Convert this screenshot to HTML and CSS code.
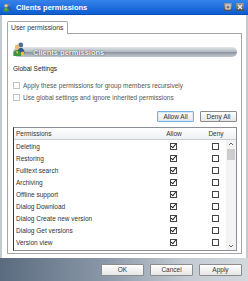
FILE: index.html
```html
<!DOCTYPE html>
<html lang="en">
<head>
  <meta charset="UTF-8" />
  <title>Clients permissions</title>
  <link rel="stylesheet" href="styles.css">
</head>
<body>
  <div class="window">
    <div class="titlebar">
      <svg class="title-icon" viewBox="0 0 10 10">
        <circle cx="6.5" cy="2.3" r="1.8" fill="#5a7fb0"/>
        <path d="M3.6 9.5 C3.6 6 4.6 4.4 6.5 4.4 C8.4 4.4 9.6 6 9.6 9.5 Z" fill="#2f5f9c"/>
        <circle cx="3.4" cy="3.6" r="1.9" fill="#f1c27a"/>
        <path d="M0.3 10 C0.3 7 1.3 5.8 3.4 5.8 C5.5 5.8 6.5 7 6.5 10 Z" fill="#3c9a3a"/>
        <path d="M2.6 7 L4.2 7 L3.4 9 Z" fill="#e8d34a"/>
      </svg>
      <span class="title">Clients permissions</span>
      <div class="title-buttons">
        <span class="tbtn">
          <svg viewBox="0 0 8 8"><rect x="2" y="2" width="4" height="4" fill="none" stroke="#eee" stroke-width="1"/></svg>
        </span>
        <span class="tbtn">
          <svg viewBox="0 0 8 8"><path d="M2 2 L6 6 M6 2 L2 6" stroke="#eee" stroke-width="1.2"/></svg>
        </span>
      </div>
    </div>

    <div class="content">
      <div class="tabs"><span class="tab">User permissions</span></div>
      <div class="panel">
        <div class="banner">
          <svg class="banner-icon" viewBox="0 0 12 14">
            <circle cx="7.8" cy="3" r="2.4" fill="#4a6f9e"/>
            <path d="M4.2 12 C4.2 7.8 5.6 6 7.8 6 C10 6 11.6 7.8 11.6 12 Z" fill="#2d5790"/>
            <circle cx="4.2" cy="5" r="2.4" fill="#eab873"/>
            <path d="M0.4 14 C0.4 9.8 1.8 8 4.2 8 C6.6 8 8 9.8 8 14 Z" fill="#39953a"/>
            <path d="M3.2 9.2 L5.2 9.2 L4.2 12.4 Z" fill="#f0d84a"/>
            <circle cx="9.6" cy="11.4" r="1.8" fill="#f2c230"/>
          </svg>
          <span class="banner-text">Clients permissions</span>
        </div>

        <div class="section-title">Global Settings</div>
        <div class="option"><span class="box box-light"></span>Apply these permissions for group members recursively</div>
        <div class="option"><span class="box box-light"></span>Use global settings and ignore inherited permissions</div>

        <div class="actions">
          <button class="btn btn-focus">Allow All</button>
          <button class="btn">Deny All</button>
        </div>

        <div class="grid">
          <div class="grid-head">
            <span class="col-name">Permissions</span>
            <span class="col-allow">Allow</span>
            <span class="col-deny">Deny</span>
          </div>
          <div class="grid-body">
            <div class="rows">
              <div class="row"><span class="col-name">Deleting</span><span class="col-allow"><span class="box checked"></span></span><span class="col-deny"><span class="box"></span></span></div>
              <div class="row"><span class="col-name">Restoring</span><span class="col-allow"><span class="box checked"></span></span><span class="col-deny"><span class="box"></span></span></div>
              <div class="row"><span class="col-name">Fulltext search</span><span class="col-allow"><span class="box checked"></span></span><span class="col-deny"><span class="box"></span></span></div>
              <div class="row"><span class="col-name">Archiving</span><span class="col-allow"><span class="box checked"></span></span><span class="col-deny"><span class="box"></span></span></div>
              <div class="row"><span class="col-name">Offline support</span><span class="col-allow"><span class="box checked"></span></span><span class="col-deny"><span class="box"></span></span></div>
              <div class="row"><span class="col-name">Dialog Download</span><span class="col-allow"><span class="box checked"></span></span><span class="col-deny"><span class="box"></span></span></div>
              <div class="row"><span class="col-name">Dialog Create new version</span><span class="col-allow"><span class="box checked"></span></span><span class="col-deny"><span class="box"></span></span></div>
              <div class="row"><span class="col-name">Dialog Get versions</span><span class="col-allow"><span class="box checked"></span></span><span class="col-deny"><span class="box"></span></span></div>
              <div class="row"><span class="col-name">Version view</span><span class="col-allow"><span class="box checked"></span></span><span class="col-deny"><span class="box"></span></span></div>
              <div class="row"><span class="col-name">&nbsp;</span><span class="col-allow"><span class="box checked"></span></span><span class="col-deny"><span class="box"></span></span></div>
            </div>
            <div class="scrollbar">
              <span class="arrow"><svg viewBox="0 0 6 4"><path d="M1 3 L3 1 L5 3" fill="none" stroke="#555" stroke-width="0.9"/></svg></span>
              <span class="thumb"></span>
              <span class="track"></span>
              <span class="arrow"><svg viewBox="0 0 6 4"><path d="M1 1 L3 3 L5 1" fill="none" stroke="#555" stroke-width="0.9"/></svg></span>
            </div>
          </div>
        </div>
      </div>
    </div>

    <div class="footer">
      <button class="btn btn-footer">OK</button>
      <button class="btn btn-footer">Cancel</button>
      <button class="btn btn-footer">Apply</button>
    </div>
  </div>
</body>
</html>
```

FILE: styles.css
```css
* {
  box-sizing: border-box;
}
body {
  margin: 0;
  font-family: 'Liberation Sans', Arial, sans-serif;
  font-size: 6.5px;
  color: #333;
  background-color: #fff;
}
.window {
  width: 248px;
  height: 281px;
  display: flex;
  flex-direction: column;
  overflow: hidden;
}
.titlebar {
  flex: none;
  height: 15px;
  display: flex;
  align-items: center;
  padding: 0 4px 0 3px;
  background: linear-gradient(#3583ea, #0e5dd1);
  border-bottom: 1px solid #0a4fb4;
  color: white;
  font-weight: bold;
  font-size: 7.5px;
}
.title-icon {
  width: 9px;
  height: 10px;
  margin-right: 4px;
}
.title-buttons {
  margin-left: auto;
  display: flex;
  gap: 4px;
}
.tbtn {
  width: 8px;
  height: 8px;
  border-radius: 1px;
  background: linear-gradient(#a0a0a0, #4a4a4a);
  display: flex;
}
.tbtn svg {
  width: 8px;
  height: 8px;
}
.content {
  flex: 1;
  min-height: 0;
  display: flex;
  flex-direction: column;
  padding: 6px 4px 4px 5px;
  border-left: 2px solid #c4c9cf;
  border-right: 2px solid #c4c9cf;
}
.tabs {
  display: flex;
}
.tab {
  position: relative;
  z-index: 1;
  height: 13px;
  margin-bottom: -1px;
  padding: 0 3px;
  line-height: 12px;
  font-size: 6.8px;
  border: 1px solid #a5a5a5;
  border-bottom: none;
  border-radius: 2px 2px 0 0;
  background-color: #fff;
}
.panel {
  flex: 1;
  min-height: 0;
  display: flex;
  flex-direction: column;
  border: 1px solid #a5a5a5;
  padding: 13px 4px 2px 5px;
}
.banner {
  position: relative;
  flex: none;
  height: 10px;
  border-radius: 5px;
  background: linear-gradient(#e4e8ec, #b3bac3 45%, #8f98a3 55%, #c3c9d0);
  display: flex;
  align-items: center;
}
.banner-icon {
  position: absolute;
  left: 0;
  top: -5px;
  width: 12px;
  height: 14px;
}
.banner-text {
  padding-left: 20px;
  font-weight: bold;
  font-size: 7.5px;
  color: #f4f6f8;
  text-shadow: 0 0 1px #555, 0 0 1px #555;
}
.section-title {
  margin-top: 7px;
  line-height: 9px;
  color: #222;
}
.option {
  flex: none;
  display: flex;
  align-items: center;
  height: 12px;
  color: #555;
}
.section-title + .option {
  margin-top: 6px;
}
.box {
  position: relative;
  display: inline-block;
  width: 7px;
  height: 7px;
  border: 1px solid #444;
  background-color: #fff;
}
.box-light {
  border-color: #c3c3c3;
  margin-right: 3px;
}
.checked::after {
  content: '';
  position: absolute;
  left: 1.4px;
  top: -0.2px;
  width: 2px;
  height: 3.6px;
  border-right: 1.3px solid #222;
  border-bottom: 1.3px solid #222;
  transform: rotate(40deg);
}
.actions {
  flex: none;
  display: flex;
  justify-content: flex-end;
  gap: 6px;
  margin-top: 8px;
}
.btn {
  height: 11px;
  padding: 0;
  font-family: inherit;
  font-size: 6.5px;
  color: #333;
  border: 1px solid #8c8c8c;
  border-radius: 1px;
  background: linear-gradient(#ffffff, #e6e6e6);
}
.actions .btn {
  width: 37px;
}
.btn-focus {
  border-color: #78aee0;
  box-shadow: inset 0 0 0 1px #d8eaf8;
}
.grid {
  flex: 1;
  min-height: 0;
  margin-top: 5px;
  display: flex;
  flex-direction: column;
  border: 1px solid #8a8f96;
  border-left-color: #333;
  overflow: hidden;
}
.grid-head {
  flex: none;
  display: flex;
  align-items: center;
  height: 12px;
  padding-right: 10px;
  border-bottom: 1px solid #c9ced4;
  background: linear-gradient(#ffffff, #eef0f2);
  color: #333;
}
.grid-body {
  flex: 1;
  min-height: 0;
  display: flex;
  overflow: hidden;
}
.rows {
  flex: 1;
  overflow: hidden;
}
.row {
  display: flex;
  align-items: center;
  height: 12px;
}
.col-name {
  flex: 1;
  padding-left: 2px;
}
.col-allow,
.col-deny {
  width: 20px;
  display: flex;
  justify-content: center;
}
.col-allow {
  margin-right: 22px;
}
.row .col-deny {
  margin-right: 1px;
}
.scrollbar {
  width: 10px;
  display: flex;
  flex-direction: column;
  background-color: #f3f3f3;
}
.arrow {
  height: 8px;
  display: flex;
  align-items: center;
  justify-content: center;
}
.arrow svg {
  width: 6px;
  height: 4px;
}
.thumb {
  height: 11px;
  margin: 1px 1px 0;
  background-color: #cdcdcd;
}
.track {
  flex: 1;
}
.footer {
  flex: none;
  height: 23px;
  display: flex;
  align-items: center;
  justify-content: flex-end;
  gap: 6px;
  padding-right: 6px;
  background: linear-gradient(to right, #5b6b7f, #8795a6 40%, #c4cbd3 75%, #d3d8dd);
}
.btn-footer {
  width: 43px;
  height: 12px;
}
```
